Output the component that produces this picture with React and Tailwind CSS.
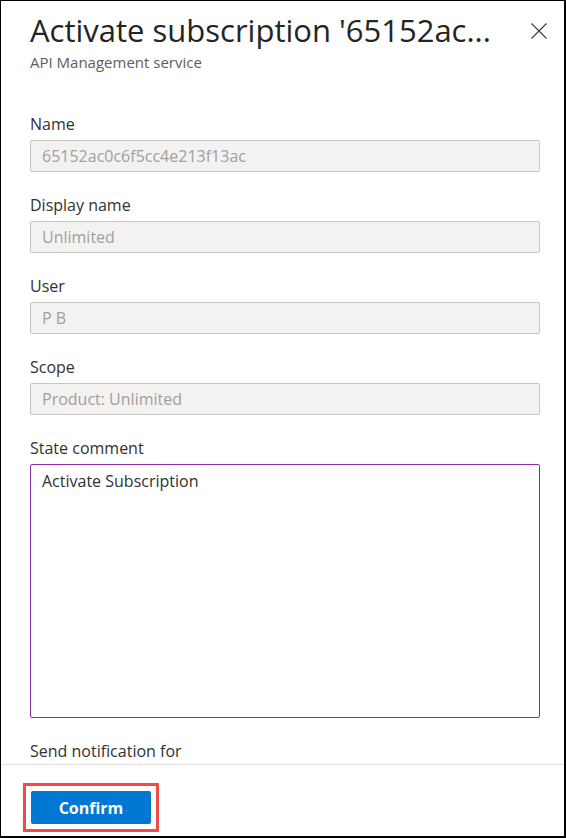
import React from "react";

const font = { fontFamily: '"Open Sans", "Noto Sans", sans-serif' };

function ReadOnlyField({ label, value }) {
  return (
    <div className="flex flex-col">
      <div className="text-[16px] leading-[22px] text-[#323130] mb-[5px]">{label}</div>
      <div className="h-[32px] w-full rounded-[2px] border border-[#c8c6c4] bg-[#f3f2f1] px-[11px] flex items-center text-[16px] text-[#a19f9d]">
        {value}
      </div>
    </div>
  );
}

export default function App() {
  return (
    <div
      className="w-[566px] h-[838px] bg-white border-t border-l border-r-2 border-b-2 border-black flex flex-col overflow-hidden"
      style={font}
    >
      <div className="flex items-start justify-between pl-[29px] pr-[13px] pt-[9px] h-[88px] shrink-0">
        <div className="flex flex-col">
          <div className="text-[31px] leading-[40px] text-[#252423] whitespace-nowrap">
            Activate subscription '65152ac...
          </div>
          <div className="text-[15px] leading-[20px] text-[#605e5c] mt-[2px]">API Management service</div>
        </div>
        <button className="mt-[9px] w-[24px] h-[24px] flex items-center justify-center text-[#323130]">
          <svg width="16" height="16" viewBox="0 0 16 16" fill="none" stroke="#3b3a39" strokeWidth="1.1">
            <path d="M0.5 0.5 L15.5 15.5 M15.5 0.5 L0.5 15.5" />
          </svg>
        </button>
      </div>

      <div className="flex-1 overflow-hidden px-[29px] pt-[24px] flex flex-col gap-[22px] pr-[24px]">
        <ReadOnlyField label="Name" value="65152ac0c6f5cc4e213f13ac" />
        <ReadOnlyField label="Display name" value="Unlimited" />
        <ReadOnlyField label="User" value="P B" />
        <ReadOnlyField label="Scope" value="Product: Unlimited" />
        <div className="flex flex-col">
          <div className="text-[16px] leading-[22px] text-[#323130] mb-[5px]">State comment</div>
          <div className="h-[254px] w-full rounded-[2px] border border-[#8a2da5] px-[11px] pt-[4px] text-[16px] leading-[24px] text-[#323130]">
            Activate Subscription
          </div>
        </div>
        <div className="flex flex-col">
          <div className="text-[16px] leading-[22px] text-[#323130] mb-[6px]">Send notification for</div>
          <div className="h-[32px] w-full rounded-[2px] border border-[#8a8886] bg-white" />
        </div>
      </div>

      <div className="h-[72px] shrink-0 border-t border-[#e1dfdd] pl-[22px] pt-[18px]">
        <div className="inline-flex border-[3px] border-[#f04a4a] p-[5px]">
          <button className="w-[120px] h-[33px] rounded-[2px] bg-[#0078d4] text-white text-[16px] font-bold flex items-center justify-center">
            Confirm
          </button>
        </div>
      </div>
    </div>
  );
}
